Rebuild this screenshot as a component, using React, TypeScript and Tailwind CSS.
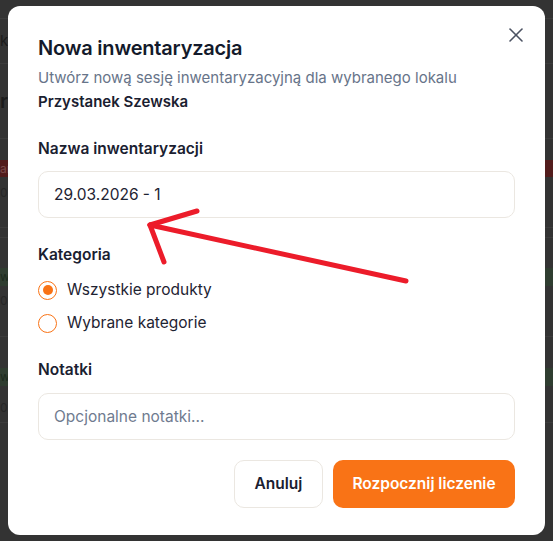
import React from 'react';
import { X } from 'lucide-react';

const font = { fontFamily: 'Inter, "Noto Sans", sans-serif' };

function Backdrop() {
  // page behind the dialog, already darkened by the overlay
  return (
    <div className="absolute inset-0 bg-[#333333] text-[#1b1b1b]">
      <div className="h-[19px] border-b border-[#3c3c3c]" />
      <div className="h-[45px] border-b border-[#3c3c3c] flex items-center text-[15px]">k</div>
      <div className="h-[75px] border-b border-[#3c3c3c] flex items-center text-[20px] font-semibold">r</div>
      <div className="h-[89px] border-b border-[#3c3c3c] pt-[21px]">
        <div className="h-[17px] bg-[#521c1c] text-[12px] text-[#7a4a4a] leading-[17px]">ar</div>
        <div className="text-[12px] text-[#262626] mt-[7px]">02</div>
      </div>
      <div className="h-[100px] border-y border-[#3c3c3c] mt-[9px] pt-[30px]">
        <div className="h-[18px] bg-[#2f3d30] text-[12px] text-[#1c2a1d] leading-[18px]">w</div>
        <div className="text-[12px] text-[#262626] mt-[6px]">02</div>
      </div>
      <div className="h-[77px] border-b border-[#3c3c3c] mt-[9px] pt-[22px]">
        <div className="h-[18px] bg-[#2f3d30] text-[12px] text-[#1c2a1d] leading-[18px]">w</div>
        <div className="text-[12px] text-[#262626] mt-[13px]">02</div>
      </div>
    </div>
  );
}

function Radio({ checked, label }: { checked: boolean; label: string }) {
  return (
    <label className="flex items-center h-[24px] gap-[10px]">
      <span className="w-[19px] h-[19px] rounded-full border-[1.5px] border-[#f97316] flex items-center justify-center">
        {checked && <span className="w-[10px] h-[10px] rounded-full bg-[#f97316]" />}
      </span>
      <span className="text-[15.5px] text-[#1e2332]">{label}</span>
    </label>
  );
}

function Arrow() {
  return (
    <svg className="absolute inset-0 pointer-events-none" width="553" height="541" viewBox="0 0 553 541">
      <g stroke="#ec1c2a" strokeWidth="5" strokeLinecap="round" fill="none">
        <line x1="150" y1="225" x2="406" y2="281" />
        <line x1="150" y1="225" x2="197" y2="211" />
        <line x1="150" y1="225" x2="164" y2="262" />
      </g>
    </svg>
  );
}

export default function App() {
  return (
    <div className="relative w-[553px] h-[541px] overflow-hidden" style={font}>
      <Backdrop />

      <div className="absolute left-[8px] top-[6px] w-[537px] h-[529px] bg-white rounded-[12px] px-[30px] pt-[28px]">
        <button className="absolute right-[17px] top-[17px] text-[#4b5262]">
          <X size={24} strokeWidth={1.6} />
        </button>

        <h2 className="text-[20px] leading-[28px] font-semibold tracking-[-0.01em] text-[#131a2b]">Nowa inwentaryzacja</h2>
        <div className="mt-[4px] text-[15px] leading-[24px]">
          <p className="text-[#677489]">Utwórz nową sesję inwentaryzacyjną dla wybranego lokalu</p>
          <p className="font-semibold text-[#1a2030]">Przystanek Szewska</p>
        </div>

        <div className="mt-[23px]">
          <div className="text-[15.5px] leading-[24px] font-semibold text-[#1a2030]">Nazwa inwentaryzacji</div>
          <div className="mt-[10px] h-[47px] rounded-[10px] border border-[#ebe7e1] flex items-center px-[15px] text-[15.5px] text-[#1e2332]">
            29.03.2026 - 1
          </div>
        </div>

        <div className="mt-[25px]">
          <div className="text-[15.5px] leading-[24px] font-semibold text-[#1a2030]">Kategoria</div>
          <div className="mt-[11px] flex flex-col gap-[9px]">
            <Radio checked label="Wszystkie produkty" />
            <Radio checked={false} label="Wybrane kategorie" />
          </div>
        </div>

        <div className="mt-[23px]">
          <div className="text-[15.5px] leading-[24px] font-semibold text-[#1a2030]">Notatki</div>
          <div className="mt-[11px] h-[47px] rounded-[10px] border border-[#ebe7e1] flex items-center px-[15px] text-[15.5px] text-[#6f7b8f]">
            Opcjonalne notatki...
          </div>
        </div>

        <div className="mt-[20px] flex justify-end gap-[10px]">
          <button className="h-[48px] w-[89px] rounded-[10px] border border-[#ebe7e1] bg-white text-[15.5px] font-semibold text-[#1a2030]">
            Anuluj
          </button>
          <button className="h-[48px] w-[182px] rounded-[10px] bg-[#f97316] text-[15.5px] font-semibold text-white">
            Rozpocznij liczenie
          </button>
        </div>
      </div>

      <Arrow />
    </div>
  );
}
